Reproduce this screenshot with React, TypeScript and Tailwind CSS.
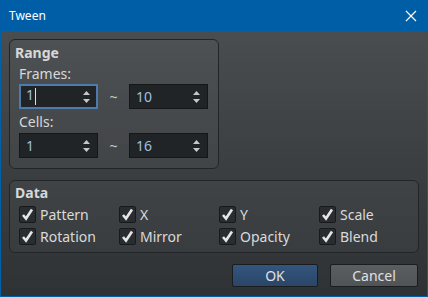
import React from "react";

const font = { fontFamily: '"Noto Sans", "Open Sans", sans-serif' };

function SpinBox({ value, focused }: { value: string; focused?: boolean }) {
  return (
    <div
      className={
        "flex items-center w-[79px] h-[25px] bg-[#202427] " +
        (focused ? "border-2 border-[#4d7bab] pl-[5px]" : "border border-[#141618] pl-[6px]")
      }
    >
      <span className="flex-1 text-[14px] text-[#9fc0e2] leading-none">
        {value}
        {focused && <span className="inline-block w-px h-[17px] bg-[#dcdcdc] align-middle ml-px" />}
      </span>
      <svg width="9" height="14" viewBox="0 0 9 14" className={focused ? "mr-[5px]" : "mr-[6px]"}>
        <path d="M4.5 1 L8 5 L1 5 Z" fill="#c8c8c8" />
        <path d="M4.5 13 L8 9 L1 9 Z" fill="#c8c8c8" />
      </svg>
    </div>
  );
}

function Check({ label }: { label: string }) {
  return (
    <div className="flex items-center gap-[4px] h-[17px]">
      <div className="w-[17px] h-[17px] rounded-[2px] bg-[#2a2d30] border border-[#17191b] flex items-center justify-center">
        <svg width="13" height="13" viewBox="0 0 13 13">
          <path d="M2 7 L5 10.5 L11 1.5" stroke="#e6e6e6" strokeWidth="2.6" fill="none" />
        </svg>
      </div>
      <span className="text-[14px] text-[#dadada] leading-[17px]">{label}</span>
    </div>
  );
}

export default function App() {
  return (
    <div className="w-[428px] h-[297px] flex flex-col bg-[#0061aa] overflow-hidden" style={font}>
      <div className="h-[31px] flex items-center justify-between pl-[9px] pr-[7px] bg-[#005ea6]">
        <span className="text-[12px] text-white">Tween</span>
        <svg width="12" height="12" viewBox="0 0 12 12" className="mr-[4px]">
          <path d="M1 1 L11 11 M11 1 L1 11" stroke="#ffffff" strokeWidth="1.2" />
        </svg>
      </div>
      <div className="flex-1 mx-px mb-px bg-gradient-to-b from-[#4a4d50] to-[#2e3235] flex flex-col pl-[8px] pr-[9px] pt-[8px]">
        <div className="w-[210px] h-[130px] rounded-[6px] border border-[#222527] bg-white/[0.03] px-[5px] pt-[3px]">
          <div className="text-[14px] font-bold text-[#d8d8d8] leading-[20px]">Range</div>
          <div className="pl-[4px]">
            <div className="text-[14px] text-[#d8d8d8] leading-[20px] mt-[1px]">Frames:</div>
            <div className="flex items-center">
              <SpinBox value="1" focused />
              <span className="w-[31px] text-center text-[#c8c8c8] text-[14px]">~</span>
              <SpinBox value="10" />
            </div>
            <div className="text-[14px] text-[#d8d8d8] leading-[20px] mt-[3px]">Cells:</div>
            <div className="flex items-center mt-[1px]">
              <SpinBox value="1" />
              <span className="w-[31px] text-center text-[#c8c8c8] text-[14px]">~</span>
              <SpinBox value="16" />
            </div>
          </div>
        </div>
        <div className="mt-[11px] w-[410px] h-[73px] rounded-[6px] border border-[#222527] bg-white/[0.03] pl-[9px] pt-[2px]">
          <div className="text-[14px] font-bold text-[#d8d8d8] leading-[20px] -ml-[4px]">Data</div>
          <div className="mt-[3px] grid grid-cols-[repeat(4,100px)] gap-y-[5px]">
            <Check label="Pattern" />
            <Check label="X" />
            <Check label="Y" />
            <Check label="Scale" />
            <Check label="Rotation" />
            <Check label="Mirror" />
            <Check label="Opacity" />
            <Check label="Blend" />
          </div>
        </div>
        <div className="flex justify-end gap-[12px] mt-[11px]">
          <button className="w-[86px] h-[23px] rounded-[2px] border border-[#1a1c1e] bg-gradient-to-b from-[#34557d] to-[#2a4668] text-[14px] text-[#e0e0e0] leading-none">
            OK
          </button>
          <button className="w-[88px] h-[23px] rounded-[2px] border border-[#1a1c1e] bg-gradient-to-b from-[#5a5e61] to-[#505457] text-[14px] text-[#e0e0e0] leading-none">
            Cancel
          </button>
        </div>
      </div>
    </div>
  );
}
